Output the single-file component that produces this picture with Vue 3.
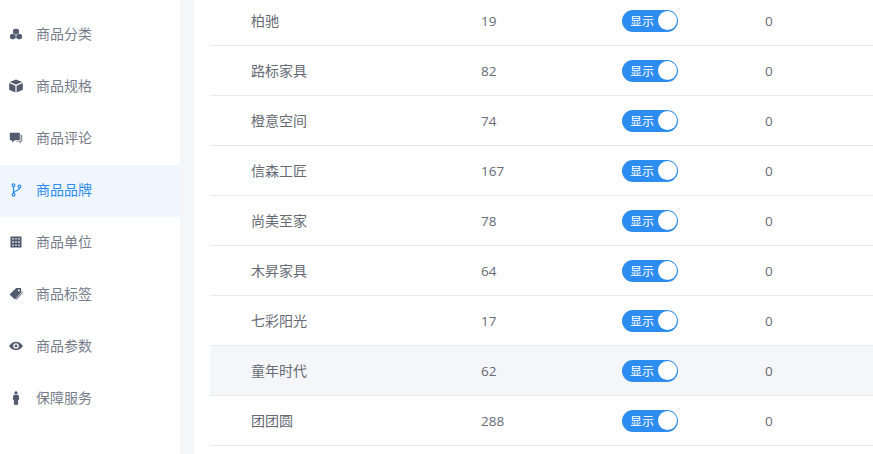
<script setup>
const menus = [
  { name: "商品分类", icon: "cubes" },
  { name: "商品规格", icon: "cube" },
  { name: "商品评论", icon: "comments" },
  { name: "商品品牌", icon: "branch", active: true },
  { name: "商品单位", icon: "grid" },
  { name: "商品标签", icon: "tags" },
  { name: "商品参数", icon: "eye" },
  { name: "保障服务", icon: "male" },
];

const brands = [
  { name: "柏驰", count: 19 },
  { name: "路标家具", count: 82 },
  { name: "橙意空间", count: 74 },
  { name: "信森工匠", count: 167 },
  { name: "尚美至家", count: 78 },
  { name: "木昇家具", count: 64 },
  { name: "七彩阳光", count: 17 },
  { name: "童年时代", count: 62, hover: true },
  { name: "团团圆", count: 288 },
];
</script>

<template>
  <div class="page">
    <aside class="side">
      <div
        v-for="m in menus"
        :key="m.name"
        class="menu-item"
        :class="{ active: m.active }"
      >
        <svg class="menu-icon" viewBox="0 0 14 14" fill="currentColor">
          <g v-if="m.icon === 'cubes'">
            <path d="M7 1.500 10 2.800V6.200L7 7.500 4 6.200V2.800Z" />
            <path d="M3.800 6.600 6.700 7.900V11.200L3.800 12.500 1 11.200V7.900Z" />
            <path d="M10.200 6.600 13 7.900V11.200L10.200 12.500 7.300 11.200V7.900Z" />
          </g>
          <g v-else-if="m.icon === 'cube'">
            <path d="M7 .6 13.200 3 7 5.600 .8 3Z" />
            <path d="M.2 4 6.400 6.700V13.500L.2 10.700Z" />
            <path d="M13.800 4 7.600 6.700V13.500L13.800 10.700Z" />
          </g>
          <g v-else-if="m.icon === 'comments'">
            <path d="M.8 1.800H10.800V9.200H5.800L3 11.500V9.200H.8Z" />
            <path d="M11.500 3.800H13.200V10.400H12V12.500L9.500 10.400H6.800L7.300 9.900H11.500Z" opacity=".7" />
          </g>
          <g
            v-else-if="m.icon === 'branch'"
            fill="none"
            stroke="currentColor"
            stroke-width="1.200"
          >
            <circle cx="4.500" cy="2.300" r="1.400" />
            <circle cx="4.500" cy="11.700" r="1.400" />
            <circle cx="10.500" cy="3.500" r="1.400" />
            <path d="M4.500 3.800V10.200M10.500 5C10.500 8 5.500 7 4.800 10.200" />
          </g>
          <g v-else-if="m.icon === 'grid'">
            <path
              fill-rule="evenodd"
              d="M1.500 1.500H12.500V12.500H1.500ZM3.300 3.300V4.600H4.800V3.300ZM6.300 3.300V4.600H7.700V3.300ZM9.200 3.300V4.600H10.700V3.300ZM3.300 6.300V7.700H4.800V6.300ZM6.300 6.300V7.700H7.700V6.300ZM9.200 6.300V7.700H10.700V6.300ZM3.300 9.400V10.700H4.800V9.400ZM6.300 9.400V10.700H7.700V9.400ZM9.200 9.400V10.700H10.700V9.400Z"
            />
          </g>
          <g v-else-if="m.icon === 'tags'">
            <path
              fill-rule="evenodd"
              d="M7.200 1H12V5.800L5.800 12.500 .6 7.400ZM9.800 2.400A1 1 0 1 0 9.800 4.400 1 1 0 0 0 9.800 2.400Z"
            />
            <path d="M12.800 2 13.600 6 7.500 12.800 6.800 12.200 12.800 5.800Z" />
          </g>
          <g v-else-if="m.icon === 'eye'">
            <path
              fill-rule="evenodd"
              d="M7 2.800C10 2.800 12.700 4.900 13.900 7 12.700 9.100 10 11.200 7 11.200S1.300 9.100 .1 7C1.300 4.900 4 2.800 7 2.800ZM7 4.200A2.800 2.800 0 1 0 7 9.800 2.800 2.800 0 0 0 7 4.200ZM7 5.600A1.400 1.400 0 1 1 7 8.400 1.400 1.400 0 0 1 7 5.600Z"
            />
          </g>
          <g v-else>
            <circle cx="7" cy="1.900" r="1.700" />
            <path d="M4.400 4.100H9.600L10.300 8.700H9.100V13.800H4.900V8.700H3.700Z" />
          </g>
        </svg>
        <span class="menu-text">{{ m.name }}</span>
      </div>
    </aside>
    <div class="gap"></div>
    <main class="list">
      <div
        v-for="b in brands"
        :key="b.name"
        class="row"
        :class="{ hover: b.hover }"
      >
        <span class="name">{{ b.name }}</span>
        <span class="num">{{ b.count }}</span>
        <span class="switch">
          <span class="switch-text">显示</span>
          <i class="knob"></i>
        </span>
        <span class="num">0</span>
      </div>
    </main>
  </div>
</template>

<style>
html,
body {
  margin: 0;
  background: #fff;
}
</style>

<style scoped>
.page {
  display: flex;
  width: 873px;
  height: 454px;
  overflow: hidden;
  background: #fff;
  font-family: "Noto Sans CJK SC", "Open Sans", sans-serif;
  font-size: 14px;
  color: #666a75;
}

.side {
  width: 180px;
  flex: none;
  padding-top: 9px;
  box-sizing: border-box;
}

.menu-item {
  display: flex;
  align-items: center;
  height: 52px;
  padding-left: 9px;
  color: #777c8c;
}

.menu-item.active {
  background: #f0f6fe;
  color: #2d8cf0;
}

.menu-text {
  margin-bottom: 5px;
}

.menu-icon {
  width: 14px;
  height: 14px;
  margin: 0 13px 2px 0;
  color: #515a6e;
}

.menu-item.active .menu-icon {
  color: #2d8cf0;
}

.gap {
  width: 14px;
  flex: none;
  background: #f5f6f9;
}

.list {
  flex: 1;
  margin-left: 16px;
  margin-top: -4px;
}

.row {
  display: grid;
  grid-template-columns: 230px 141px 143px 1fr;
  align-items: center;
  height: 50px;
  padding-left: 41px;
  box-sizing: border-box;
  border-bottom: 1px solid #e8eaec;
}

.row.hover {
  background: #f5f6f9;
}

.name {
  margin-bottom: 2px;
}

.num {
  font-family: "Open Sans", sans-serif;
  font-size: 13.500px;
}

.switch {
  display: flex;
  align-items: center;
  justify-content: space-between;
  width: 56px;
  height: 22px;
  padding: 0 1.500px 0 8px;
  box-sizing: border-box;
  border-radius: 11px;
  background: #2d8cf0;
  color: #fff;
  font-size: 12px;
}

.knob {
  display: block;
  width: 19px;
  height: 19px;
  border-radius: 50%;
  background: #fff;
}
</style>
